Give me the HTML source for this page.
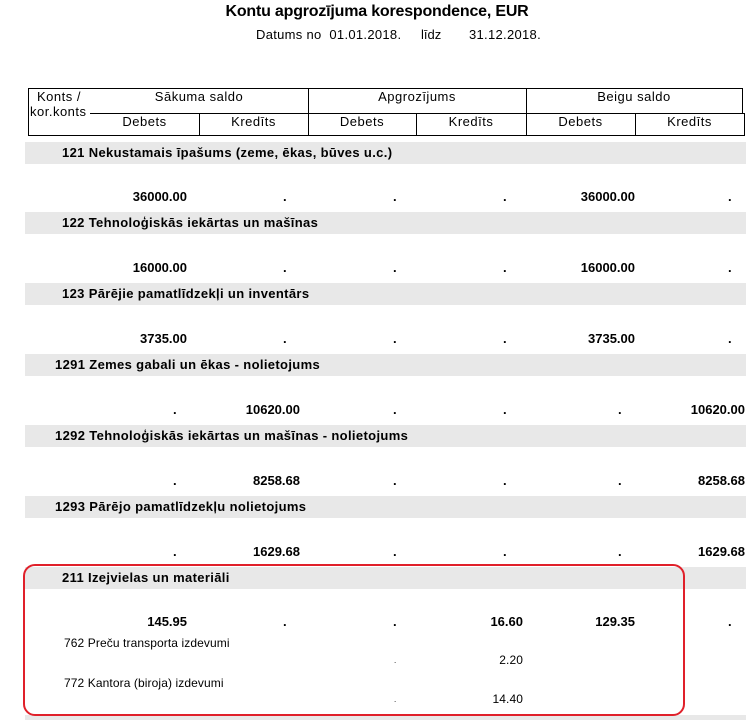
<!DOCTYPE html>
<html><head><meta charset="utf-8"><style>
body{margin:0;width:754px;height:720px;background:#fff;font-family:"Liberation Sans",Arial,sans-serif;color:#000;position:relative;overflow:hidden}
.a{position:absolute;white-space:nowrap}
.b{font-weight:bold;font-size:13px}
.t{letter-spacing:0.35px}
.bar{position:absolute;left:25px;width:721px;height:22px;background:#e8e8e8}
.r{text-align:right}
.l{position:absolute;background:#000}
.h{font-size:13px;text-align:center;letter-spacing:0.5px}
.s{font-size:12px;letter-spacing:0.1px}
</style></head><body>
<div class="a" style="left:0;width:754px;text-align:center;top:3px;font-weight:bold;font-size:16px;letter-spacing:-0.2px">Kontu apgrozījuma korespondence, EUR</div>
<div class="a" style="left:256px;top:27px;font-size:13px;letter-spacing:0.3px">Datums no&nbsp; 01.01.2018.</div>
<div class="a" style="left:421px;top:27px;font-size:13px">līdz</div>
<div class="a" style="left:469px;top:27px;font-size:13px;letter-spacing:0.3px">31.12.2018.</div>

<!-- header box -->
<div class="l" style="left:28px;top:88px;width:715px;height:1px"></div>
<div class="l" style="left:28px;top:135px;width:717px;height:1px"></div>
<div class="l" style="left:28px;top:88px;width:1px;height:48px"></div>
<div class="l" style="left:742px;top:88px;width:1px;height:25px"></div>
<div class="l" style="left:744px;top:113px;width:1px;height:23px"></div>
<div class="l" style="left:90px;top:113px;width:654px;height:1px"></div>
<div class="l" style="left:308px;top:88px;width:1px;height:48px"></div>
<div class="l" style="left:526px;top:88px;width:1px;height:48px"></div>
<div class="l" style="left:199px;top:113px;width:1px;height:23px"></div>
<div class="l" style="left:416px;top:113px;width:1px;height:23px"></div>
<div class="l" style="left:635px;top:113px;width:1px;height:23px"></div>
<div class="a" style="left:37px;top:89px;font-size:13px;letter-spacing:0.5px">Konts /</div>
<div class="a" style="left:30px;top:104px;font-size:13px;letter-spacing:0.5px;background:#fff">kor.konts</div>
<div class="a h" style="left:90px;width:218px;top:89px">Sākuma saldo</div>
<div class="a h" style="left:308px;width:218px;top:89px">Apgrozījums</div>
<div class="a h" style="left:526px;width:216px;top:89px">Beigu saldo</div>
<div class="a h" style="left:90px;width:109px;top:114px">Debets</div>
<div class="a h" style="left:199px;width:109px;top:114px">Kredīts</div>
<div class="a h" style="left:308px;width:108px;top:114px">Debets</div>
<div class="a h" style="left:416px;width:110px;top:114px">Kredīts</div>
<div class="a h" style="left:526px;width:109px;top:114px">Debets</div>
<div class="a h" style="left:635px;width:109px;top:114px">Kredīts</div>

<!-- rows -->
<div class="bar" style="top:142px"></div>
<div class="a b t" style="left:62px;top:145px">121 Nekustamais īpašums (zeme, ēkas, būves u.c.)</div>
<div class="a b r" style="right:567px;top:189px">36000.00</div>
<div class="a b" style="left:283px;top:189px">.</div><div class="a b" style="left:393px;top:189px">.</div><div class="a b" style="left:503px;top:189px">.</div>
<div class="a b r" style="right:119px;top:189px">36000.00</div><div class="a b" style="left:728px;top:189px">.</div>

<div class="bar" style="top:212px"></div>
<div class="a b t" style="left:62px;top:215px">122 Tehnoloģiskās iekārtas un mašīnas</div>
<div class="a b r" style="right:567px;top:260px">16000.00</div>
<div class="a b" style="left:283px;top:260px">.</div><div class="a b" style="left:393px;top:260px">.</div><div class="a b" style="left:503px;top:260px">.</div>
<div class="a b r" style="right:119px;top:260px">16000.00</div><div class="a b" style="left:728px;top:260px">.</div>

<div class="bar" style="top:283px"></div>
<div class="a b t" style="left:62px;top:286px">123 Pārējie pamatlīdzekļi un inventārs</div>
<div class="a b r" style="right:567px;top:331px">3735.00</div>
<div class="a b" style="left:283px;top:331px">.</div><div class="a b" style="left:393px;top:331px">.</div><div class="a b" style="left:503px;top:331px">.</div>
<div class="a b r" style="right:119px;top:331px">3735.00</div><div class="a b" style="left:728px;top:331px">.</div>

<div class="bar" style="top:354px"></div>
<div class="a b t" style="left:55px;top:357px">1291 Zemes gabali un ēkas - nolietojums</div>
<div class="a b" style="left:173px;top:402px">.</div>
<div class="a b r" style="right:454px;top:402px">10620.00</div>
<div class="a b" style="left:393px;top:402px">.</div><div class="a b" style="left:503px;top:402px">.</div><div class="a b" style="left:618px;top:402px">.</div>
<div class="a b r" style="right:9px;top:402px">10620.00</div>

<div class="bar" style="top:425px"></div>
<div class="a b t" style="left:55px;top:428px">1292 Tehnoloģiskās iekārtas un mašīnas - nolietojums</div>
<div class="a b" style="left:173px;top:473px">.</div>
<div class="a b r" style="right:454px;top:473px">8258.68</div>
<div class="a b" style="left:393px;top:473px">.</div><div class="a b" style="left:503px;top:473px">.</div><div class="a b" style="left:618px;top:473px">.</div>
<div class="a b r" style="right:9px;top:473px">8258.68</div>

<div class="bar" style="top:496px"></div>
<div class="a b t" style="left:55px;top:499px">1293 Pārējo pamatlīdzekļu nolietojums</div>
<div class="a b" style="left:173px;top:544px">.</div>
<div class="a b r" style="right:454px;top:544px">1629.68</div>
<div class="a b" style="left:393px;top:544px">.</div><div class="a b" style="left:503px;top:544px">.</div><div class="a b" style="left:618px;top:544px">.</div>
<div class="a b r" style="right:9px;top:544px">1629.68</div>

<div class="bar" style="top:567px"></div>
<div class="a b t" style="left:62px;top:570px">211 Izejvielas un materiāli</div>
<div class="a b r" style="right:567px;top:614px">145.95</div>
<div class="a b" style="left:283px;top:614px">.</div><div class="a b" style="left:393px;top:614px">.</div>
<div class="a b r" style="right:231px;top:614px">16.60</div>
<div class="a b r" style="right:119px;top:614px">129.35</div><div class="a b" style="left:728px;top:614px">.</div>
<div class="a s" style="left:64px;top:636px">762 Preču transporta izdevumi</div>
<div class="a" style="left:394px;top:656px;font-size:8px">.</div>
<div class="a r s" style="right:231px;top:653px">2.20</div>
<div class="a s" style="left:64px;top:676px">772 Kantora (biroja) izdevumi</div>
<div class="a" style="left:394px;top:695px;font-size:8px">.</div>
<div class="a r s" style="right:231px;top:692px">14.40</div>
<div class="bar" style="top:715px;height:5px"></div>
<div style="position:absolute;left:23px;top:564px;width:658px;height:148px;border:2px solid #e0202a;border-radius:12px"></div>
</body></html>
